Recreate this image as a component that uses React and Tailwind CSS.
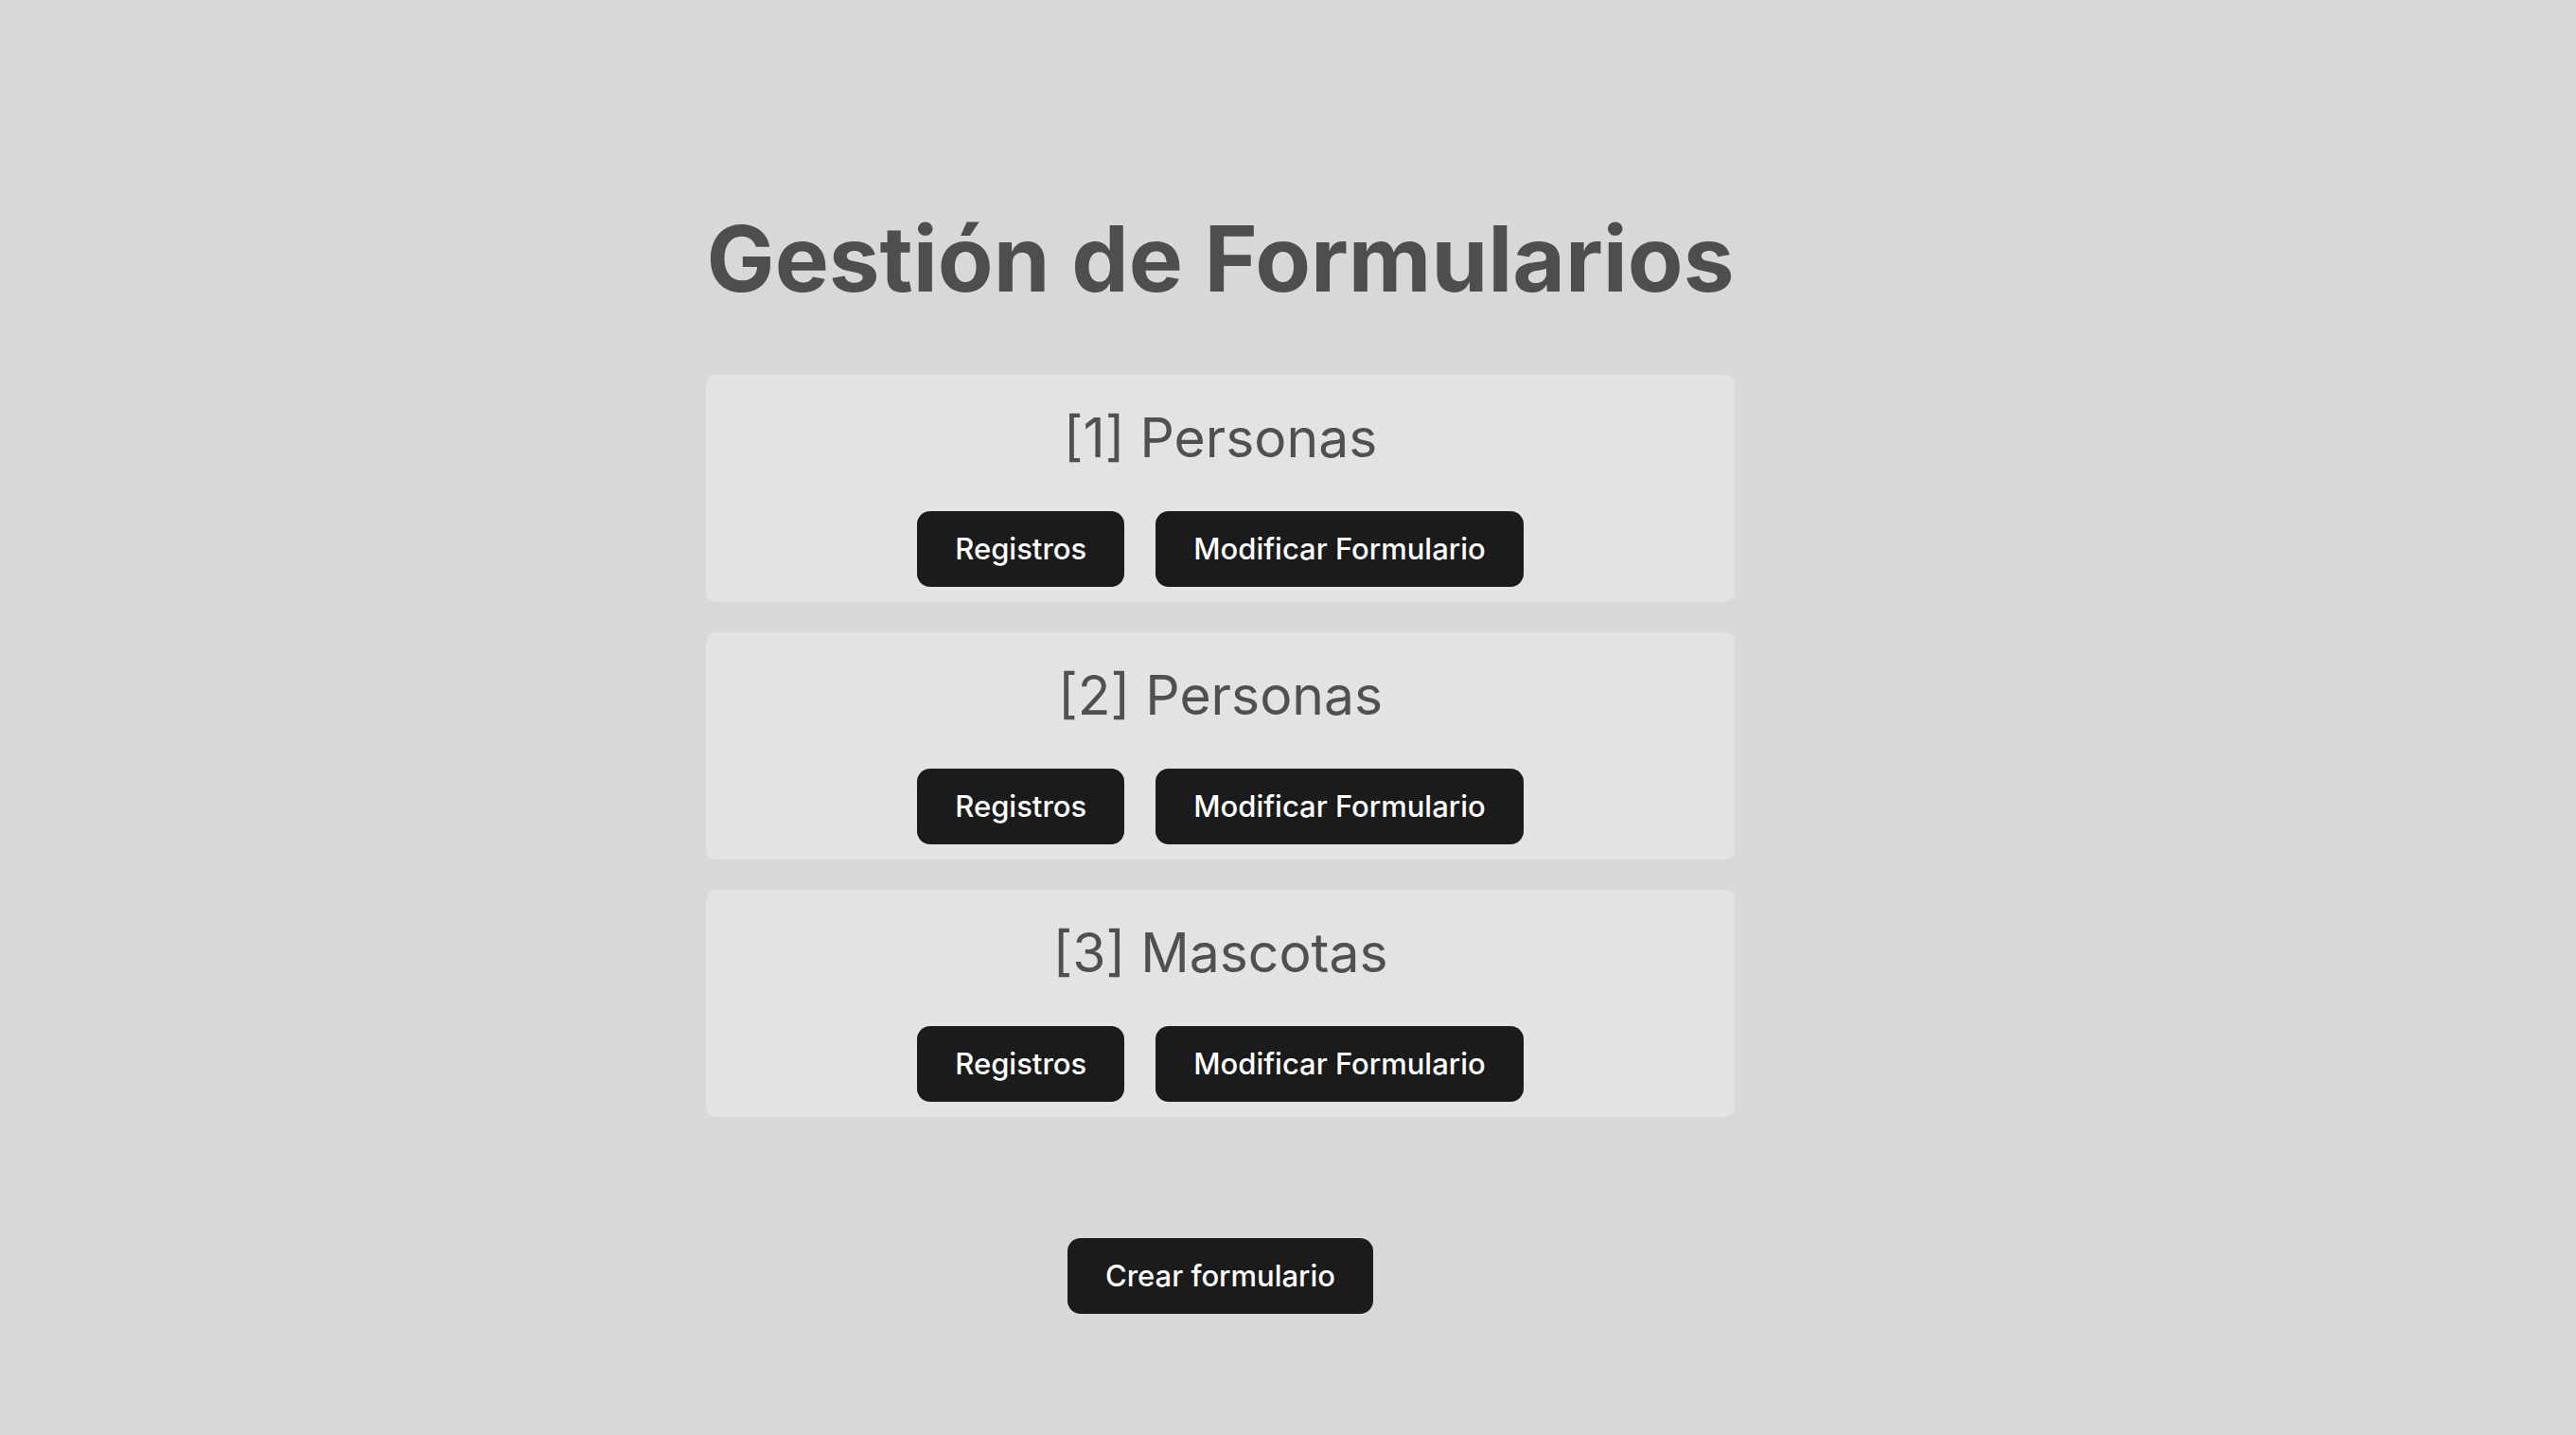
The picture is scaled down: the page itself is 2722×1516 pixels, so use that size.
import React from "react";

const forms = [
  { id: 1, name: "Personas" },
  { id: 2, name: "Personas" },
  { id: 3, name: "Mascotas" },
];

function Btn({ children }) {
  return (
    <button className="h-[80px] px-[40px] rounded-[14px] bg-[#1b1b1b] text-white text-[31px] leading-[48px] font-medium">
      {children}
    </button>
  );
}

export default function App() {
  return (
    <div
      className="min-h-[1516px] w-full bg-[#d9d8d6] flex justify-center pr-[143px] pt-[215px]"
      style={{ fontFamily: "Inter, 'Noto Sans', sans-serif" }}
    >
      <div className="w-[1087px] flex flex-col items-center">
        <h1 className="text-[96px] leading-[116px] font-bold text-[#4e4e4e] mb-[65px]">
          Gestión de Formularios
        </h1>
        <div className="w-full flex flex-col gap-8">
          {forms.map((f) => (
            <div
              key={f.id}
              className="w-full bg-[#e3e3e3] rounded-[10px] pt-[33px] pb-[16px] flex flex-col items-center"
            >
              <h2 className="text-[57px] leading-[68px] font-normal text-[#505050]">
                [{f.id}] {f.name}
              </h2>
              <div className="mt-[43px] flex gap-[33px]">
                <Btn>Registros</Btn>
                <Btn>Modificar Formulario</Btn>
              </div>
            </div>
          ))}
        </div>
        <div className="mt-[128px]">
          <Btn>Crear formulario</Btn>
        </div>
      </div>
    </div>
  );
}
